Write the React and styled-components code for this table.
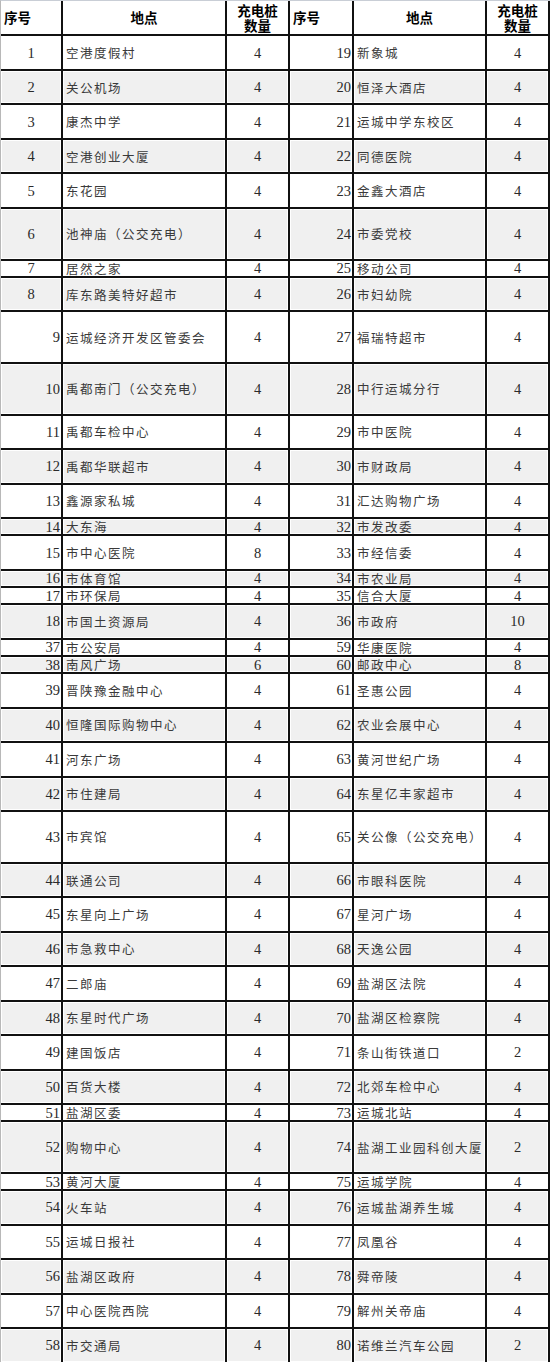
import React from "react";
import styled, { createGlobalStyle } from "styled-components";

const UNIT = 1362 / 79;

const GlobalStyle = createGlobalStyle`
  html, body {
    margin: 0;
    padding: 0;
    background: #fff;
  }
  body {
    width: 550px;
    font-family: "Liberation Serif", "Noto Sans CJK SC", serif;
  }
`;

// [units, left, right]; each side = [seq, name, count]
const rows = [
  [2, [1, "空港度假村", 4], [19, "新象城", 4]],
  [2, [2, "关公机场", 4], [20, "恒泽大酒店", 4]],
  [2, [3, "康杰中学", 4], [21, "运城中学东校区", 4]],
  [2, [4, "空港创业大厦", 4], [22, "同德医院", 4]],
  [2, [5, "东花园", 4], [23, "金鑫大酒店", 4]],
  [3, [6, "池神庙（公交充电）", 4], [24, "市委党校", 4]],
  [1, [7, "居然之家", 4], [25, "移动公司", 4]],
  [2, [8, "库东路美特好超市", 4], [26, "市妇幼院", 4]],
  [3, [9, "运城经济开发区管委会", 4], [27, "福瑞特超市", 4]],
  [3, [10, "禹都南门（公交充电）", 4], [28, "中行运城分行", 4]],
  [2, [11, "禹都车检中心", 4], [29, "市中医院", 4]],
  [2, [12, "禹都华联超市", 4], [30, "市财政局", 4]],
  [2, [13, "鑫源家私城", 4], [31, "汇达购物广场", 4]],
  [1, [14, "大东海", 4], [32, "市发改委", 4]],
  [2, [15, "市中心医院", 8], [33, "市经信委", 4]],
  [1, [16, "市体育馆", 4], [34, "市农业局", 4]],
  [1, [17, "市环保局", 4], [35, "信合大厦", 4]],
  [2, [18, "市国土资源局", 4], [36, "市政府", 10]],
  [1, [37, "市公安局", 4], [59, "华康医院", 4]],
  [1, [38, "南风广场", 6], [60, "邮政中心", 8]],
  [2, [39, "晋陕豫金融中心", 4], [61, "圣惠公园", 4]],
  [2, [40, "恒隆国际购物中心", 4], [62, "农业会展中心", 4]],
  [2, [41, "河东广场", 4], [63, "黄河世纪广场", 4]],
  [2, [42, "市住建局", 4], [64, "东星亿丰家超市", 4]],
  [3, [43, "市宾馆", 4], [65, "关公像（公交充电）", 4]],
  [2, [44, "联通公司", 4], [66, "市眼科医院", 4]],
  [2, [45, "东星向上广场", 4], [67, "星河广场", 4]],
  [2, [46, "市急救中心", 4], [68, "天逸公园", 4]],
  [2, [47, "二郎庙", 4], [69, "盐湖区法院", 4]],
  [2, [48, "东星时代广场", 4], [70, "盐湖区检察院", 4]],
  [2, [49, "建国饭店", 4], [71, "条山街铁道口", 2]],
  [2, [50, "百货大楼", 4], [72, "北郊车检中心", 4]],
  [1, [51, "盐湖区委", 4], [73, "运城北站", 4]],
  [3, [52, "购物中心", 4], [74, "盐湖工业园科创大厦", 2]],
  [1, [53, "黄河大厦", 4], [75, "运城学院", 4]],
  [2, [54, "火车站", 4], [76, "运城盐湖养生城", 4]],
  [2, [55, "运城日报社", 4], [77, "凤凰谷", 4]],
  [2, [56, "盐湖区政府", 4], [78, "舜帝陵", 4]],
  [2, [57, "中心医院西院", 4], [79, "解州关帝庙", 4]],
  [2, [58, "市交通局", 4], [80, "诺维兰汽车公园", 2]],
];

const Sheet = styled.div`
  width: 550px;
  border-top: 1px solid #c9ced6;
  border-left: 1px solid #b8b8b8;
  box-sizing: border-box;
  display: flex;
  flex-direction: column;
`;

const Row = styled.div`
  display: grid;
  grid-template-columns: 62px 164px 63px 64px 133px 63px;
  height: ${(p) => p.$h}px;
  background: ${(p) => (p.$shade ? "#f0f0f0" : "#fff")};
  border-bottom: 2px solid #111;
  box-sizing: border-box;
`;

const Cell = styled.div`
  display: flex;
  align-items: center;
  justify-content: ${(p) => p.$align || "flex-start"};
  border-right: 2px solid #111;
  box-sizing: border-box;
  padding: 0 ${(p) => (p.$align === "flex-end" ? "1px" : "3px")} 0 3px;
  color: #2a2a2a;
  white-space: nowrap;
  min-height: 0;
  box-shadow: ${(p) => (p.$shade ? "inset 0 0 0 1px #fff" : "none")};
`;

const Num = styled.span`
  font-family: "Liberation Serif", serif;
  font-size: 14.5px;
  line-height: 14px;
`;

const Name = styled.span`
  font-family: "Noto Sans CJK SC", sans-serif;
  font-size: 12.5px;
  letter-spacing: 1.5px;
  line-height: 13px;
  font-weight: 400;
  color: #3a3a3a;
`;

const HeadCell = styled(Cell)`
  flex-direction: column;
  justify-content: center;
  align-items: ${(p) => p.$align || "flex-start"};
  color: #000;
  font-family: "Noto Sans CJK SC", sans-serif;
  font-weight: 700;
  font-size: 13.5px;
  line-height: 15px;
`;

const HeadLine = styled.span`
  display: block;
  line-height: 15px;
`;

const Side = ({ item, shade, centerSeq }) => {
  const [seq, name, count] = item;
  return (
    <>
      <Cell $shade={shade} $align={centerSeq ? "center" : "flex-end"}>
        <Num>{seq}</Num>
      </Cell>
      <Cell $shade={shade}>
        <Name>{name}</Name>
      </Cell>
      <Cell $shade={shade} $align="center">
        <Num>{count}</Num>
      </Cell>
    </>
  );
};

const Header = () => (
  <>
    <HeadCell>序号</HeadCell>
    <HeadCell $align="center">地点</HeadCell>
    <HeadCell $align="center">
      <HeadLine>充电桩</HeadLine>
      <HeadLine>数量</HeadLine>
    </HeadCell>
  </>
);

const App = () => {
  return (
    <>
      <GlobalStyle />
      <Sheet>
        <Row $h={UNIT * 2 + 1}>
          <Header />
          <Header />
        </Row>
        {rows.map(([units, left, right], idx) => {
          const shade = idx % 2 === 1;
          return (
            <Row key={left[0]} $h={UNIT * units} $shade={shade}>
              <Side item={left} shade={shade} centerSeq={idx < 8} />
              <Side item={right} shade={shade} />
            </Row>
          );
        })}
      </Sheet>
    </>
  );
};

export default App;
